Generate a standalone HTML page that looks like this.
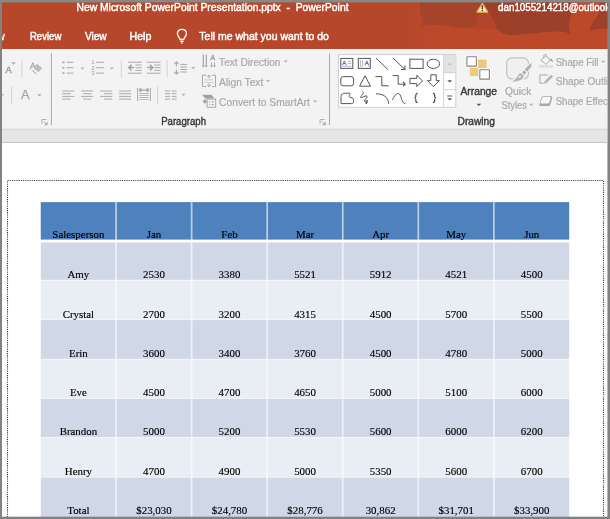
<!DOCTYPE html>
<html><head><meta charset="utf-8"><title>PowerPoint</title>
<style>
html,body{margin:0;padding:0;background:#fff;overflow:hidden}
svg{display:block;will-change:transform}
text{white-space:pre}
</style></head><body>
<svg width="610" height="519" viewBox="0 0 610 519">
<rect x="0" y="0" width="610" height="519" fill="#828282"/>
<rect x="2" y="2" width="605.6" height="515" fill="#fff"/>
<rect x="2" y="2" width="605.6" height="47" fill="#B7472A"/>
<defs><linearGradient id="lg" x1="0" x2="1" y1="0" y2="0"><stop offset="0" stop-color="#B7472A"/><stop offset="0.18" stop-color="#BD492B"/><stop offset="1" stop-color="#BD492B"/></linearGradient></defs>
<g id="decor">
<rect x="405" y="2" width="202.6" height="47" fill="url(#lg)"/>
<path d="M478 13 H498 V30 C490 29 480 28.5 470 28 Z" fill="#B2452B"/>
<path d="M420 2 H481 C480.5 8 479.5 12 478 16 C477 20 476 23 474 25.5 C472 27.5 468 28.5 462 28.3 C456 27.6 450 26 444 25.4 C438 24.6 432 24.2 428 24.5 C425 25.2 422 26.4 419.8 27.8 C421.6 25 422.6 22.5 422.5 20 C420.5 16 419.6 9 420 2Z" fill="#A5432B"/>
<path d="M484 2 H575.5 C572.5 7 571 11.5 571.3 15.5 C569.8 18.5 569.2 22 568.8 26 C569 29.5 570 32.5 571.4 35.4 C568.5 33.2 566 32.2 563.5 31.8 C558 31.2 553 31.4 548 31.8 C541 32.6 534 33.6 527 33.7 C521 34.6 516 35.2 511.6 35.2 C508 34.8 505 34.2 502.5 33.2 C499.6 31.8 497.4 29.6 496.2 26.6 C495 22 492.5 17 489 13 L484 2Z" fill="#9D402A"/>
<path d="M601 2 H607.6 V28.2 C603 28.4 598.6 28.8 594.5 29.4 C592.6 30 590.8 30.8 589.2 31.9 C589.6 29.8 590.2 27.8 591 25.8 C592.4 22.8 594.2 20 596.2 17.2 C597.4 15.8 598.2 14.4 598.8 12.9 C600 9.4 600.6 5.6 601 2Z" fill="#9D402A"/>
</g>
<rect x="2" y="49" width="605.6" height="80" fill="#F3F3F3"/>
<rect x="2" y="129" width="605.6" height="14" fill="#E6E6E6"/>
<rect x="2" y="128.7" width="605.6" height="1" fill="#D6D6D6"/>
<rect x="2" y="142" width="605.6" height="1" fill="#C8C8C8"/>
<text x="76.5" y="10.5" font-size="11" fill="#fff" font-family="'Liberation Sans', sans-serif" text-anchor="start" textLength="272" lengthAdjust="spacingAndGlyphs" stroke="#fff" stroke-width="0.45">New Microsoft PowerPoint Presentation.pptx&#160;&#160;-&#160;&#160;PowerPoint</text>
<path d="M482.3 3.2 L488 12.2 H476.6 Z" fill="#FCE7AE" stroke="#E9A540" stroke-width="1" stroke-linejoin="round"/>
<rect x="481.7" y="5.2" width="1.2" height="4" fill="#2A2A2A"/><rect x="481.7" y="9.9" width="1.2" height="1.3" fill="#2A2A2A"/>
<clipPath id="cr"><rect x="2" y="0" width="605.6" height="519"/></clipPath>
<g clip-path="url(#cr)">
<text x="498.1" y="10.5" font-size="11" fill="#fff" font-family="'Liberation Sans', sans-serif" text-anchor="start" textLength="133.2" lengthAdjust="spacingAndGlyphs" stroke="#fff" stroke-width="0.45">dan1055214218@outlook.com</text>
</g>
<clipPath id="cl"><rect x="2" y="0" width="606" height="519"/></clipPath>
<g clip-path="url(#cl)">
<text x="-2.6" y="39.9" font-size="10" fill="#fff" font-family="'Liberation Sans', sans-serif" text-anchor="start" stroke="#fff" stroke-width="0.3">w</text>
</g>
<text x="29.9" y="39.8" font-size="10.9" fill="#fff" font-family="'Liberation Sans', sans-serif" text-anchor="start" textLength="31.5" lengthAdjust="spacingAndGlyphs" stroke="#fff" stroke-width="0.45">Review</text>
<text x="84.9" y="39.8" font-size="10.9" fill="#fff" font-family="'Liberation Sans', sans-serif" text-anchor="start" textLength="21.8" lengthAdjust="spacingAndGlyphs" stroke="#fff" stroke-width="0.45">View</text>
<text x="129.5" y="39.8" font-size="10.9" fill="#fff" font-family="'Liberation Sans', sans-serif" text-anchor="start" textLength="21.8" lengthAdjust="spacingAndGlyphs" stroke="#fff" stroke-width="0.45">Help</text>
<text x="199.3" y="39.8" font-size="10.9" fill="#fff" font-family="'Liberation Sans', sans-serif" text-anchor="start" textLength="129.6" lengthAdjust="spacingAndGlyphs" stroke="#fff" stroke-width="0.45">Tell me what you want to do</text>
<path d="M180 39.5 C180 37.6 177.4 36.6 177.4 33.6 C177.4 31 179.4 29.4 181.9 29.4 C184.4 29.4 186.4 31 186.4 33.6 C186.4 36.6 183.8 37.6 183.8 39.5 Z" fill="none" stroke="#fff" stroke-width="1.3" stroke-linejoin="round"/>
<path d="M180.3 41.3 H183.5 M180.9 43 H182.9" stroke="#fff" stroke-width="1.2" fill="none"/>
<text x="5.5" y="73.1" font-size="9.2" fill="#A0A0A0" font-family="'Liberation Sans', sans-serif" text-anchor="start" stroke="#A0A0A0" stroke-width="0.5">A</text>
<path d="M11.1 62.15H15.9L13.5 64.85Z" fill="#B0B0B0"/>
<line x1="21.8" y1="59.8" x2="21.8" y2="77.2" stroke="#D4D4D4" stroke-width="1"/>
<text x="30.1" y="68.8" font-size="9" fill="#A4A4A4" font-family="'Liberation Sans', sans-serif" text-anchor="start" textLength="5.6" lengthAdjust="spacingAndGlyphs" stroke="#A4A4A4" stroke-width="0.4">A</text>
<path d="M37 63.8 L42.2 67.9 L38.4 72.3 L33.6 68.1 Z" fill="#BCBCBC"/>
<path d="M32.3 70.3 L36.3 73.8" stroke="#B0B0B0" stroke-width="1.1" fill="none"/>
<line x1="2" y1="94.8" x2="4" y2="94.8" stroke="#A9A9A9" stroke-width="1"/>
<line x1="11.7" y1="86.7" x2="11.7" y2="103.9" stroke="#D4D4D4" stroke-width="1"/>
<text x="21" y="98.8" font-size="12.2" fill="#A9A9A9" font-family="'Liberation Sans', sans-serif" text-anchor="start" textLength="8.6" lengthAdjust="spacingAndGlyphs" stroke="#A9A9A9" stroke-width="0.3">A</text>
<path d="M37.199999999999996 94.14999999999999H41.6L39.4 96.45Z" fill="#A9A9A9"/>
<path d="M41.800000000000004 123.89999999999999 V119.5 H46.4" fill="none" stroke="#B0B0B0" stroke-width="1"/>
<path d="M43.6 121.3 L46.2 123.89999999999999" fill="none" stroke="#B0B0B0" stroke-width="1"/>
<path d="M47.6 121.5 V125.3 H43.800000000000004 Z" fill="#ADADAD"/>
<line x1="51.4" y1="53.3" x2="51.4" y2="125.1" stroke="#A8A8A8" stroke-width="1"/>
<rect x="62.5" y="61.4" width="1.9" height="1.9" fill="#A9A9A9"/>
<line x1="66.6" y1="62.3" x2="73.4" y2="62.3" stroke="#A9A9A9" stroke-width="1"/>
<rect x="62.5" y="66.8" width="1.9" height="1.9" fill="#A9A9A9"/>
<line x1="66.6" y1="67.7" x2="73.4" y2="67.7" stroke="#A9A9A9" stroke-width="1"/>
<rect x="62.5" y="72.19999999999999" width="1.9" height="1.9" fill="#A9A9A9"/>
<line x1="66.6" y1="73.1" x2="73.4" y2="73.1" stroke="#A9A9A9" stroke-width="1"/>
<path d="M80.2 67.44999999999999H84.60000000000001L82.4 69.75Z" fill="#B4B4B4"/>
<text x="91.6" y="64.2" font-size="5.4" fill="#999" font-family="'Liberation Sans', sans-serif" text-anchor="start">1</text>
<line x1="96" y1="62.3" x2="104" y2="62.3" stroke="#A9A9A9" stroke-width="1"/>
<text x="91.6" y="69.60000000000001" font-size="5.4" fill="#999" font-family="'Liberation Sans', sans-serif" text-anchor="start">2</text>
<line x1="96" y1="67.7" x2="104" y2="67.7" stroke="#A9A9A9" stroke-width="1"/>
<text x="91.6" y="75.0" font-size="5.4" fill="#999" font-family="'Liberation Sans', sans-serif" text-anchor="start">3</text>
<line x1="96" y1="73.1" x2="104" y2="73.1" stroke="#A9A9A9" stroke-width="1"/>
<path d="M109.6 67.44999999999999H114.0L111.8 69.75Z" fill="#B4B4B4"/>
<line x1="121.3" y1="60" x2="121.3" y2="77.4" stroke="#D4D4D4" stroke-width="1"/>
<line x1="128.1" y1="62.2" x2="141.7" y2="62.2" stroke="#A9A9A9" stroke-width="1"/>
<line x1="128.1" y1="73.2" x2="141.7" y2="73.2" stroke="#A9A9A9" stroke-width="1"/>
<line x1="135.4" y1="65" x2="141.7" y2="65" stroke="#A9A9A9" stroke-width="1"/>
<line x1="135.4" y1="67.7" x2="141.7" y2="67.7" stroke="#A9A9A9" stroke-width="1"/>
<line x1="135.4" y1="70.4" x2="141.7" y2="70.4" stroke="#A9A9A9" stroke-width="1"/>
<path d="M134 67.6 H129 M131.6 64.7 L128.7 67.6 L131.6 70.5" fill="none" stroke="#A2A2A2" stroke-width="1.5"/>
<line x1="147" y1="62.2" x2="160.6" y2="62.2" stroke="#A9A9A9" stroke-width="1"/>
<line x1="147" y1="73.2" x2="160.6" y2="73.2" stroke="#A9A9A9" stroke-width="1"/>
<line x1="154.3" y1="65" x2="160.6" y2="65" stroke="#A9A9A9" stroke-width="1"/>
<line x1="154.3" y1="67.7" x2="160.6" y2="67.7" stroke="#A9A9A9" stroke-width="1"/>
<line x1="154.3" y1="70.4" x2="160.6" y2="70.4" stroke="#A9A9A9" stroke-width="1"/>
<path d="M147.2 67.6 H152.6 M150 64.7 L152.9 67.6 L150 70.5" fill="none" stroke="#A2A2A2" stroke-width="1.5"/>
<line x1="167.1" y1="60" x2="167.1" y2="77.4" stroke="#D4D4D4" stroke-width="1"/>
<path d="M176.4 61.8 V66.6 M174.2 64.2 L176.4 61.9 L178.6 64.2 M176.4 69.4 V74.4 M174.2 72 L176.4 74.3 L178.6 72" fill="none" stroke="#A9A9A9" stroke-width="1.1"/>
<line x1="180.3" y1="64.4" x2="186.9" y2="64.4" stroke="#A9A9A9" stroke-width="1"/>
<line x1="180.3" y1="67" x2="186.9" y2="67" stroke="#A9A9A9" stroke-width="1"/>
<line x1="180.3" y1="69.5" x2="186.9" y2="69.5" stroke="#A9A9A9" stroke-width="1"/>
<line x1="180.3" y1="72" x2="186.9" y2="72" stroke="#A9A9A9" stroke-width="1"/>
<path d="M191.0 67.05H195.39999999999998L193.2 69.35000000000001Z" fill="#B4B4B4"/>
<line x1="62.3" y1="91" x2="74.2" y2="91" stroke="#A9A9A9" stroke-width="1"/>
<line x1="81.1" y1="91" x2="93.2" y2="91" stroke="#A9A9A9" stroke-width="1"/>
<line x1="100.1" y1="91" x2="112.3" y2="91" stroke="#A9A9A9" stroke-width="1"/>
<line x1="119.1" y1="91" x2="131.1" y2="91" stroke="#A9A9A9" stroke-width="1"/>
<line x1="62.3" y1="93.7" x2="70.8" y2="93.7" stroke="#A9A9A9" stroke-width="1"/>
<line x1="83.1" y1="93.7" x2="91.3" y2="93.7" stroke="#A9A9A9" stroke-width="1"/>
<line x1="104" y1="93.7" x2="112.3" y2="93.7" stroke="#A9A9A9" stroke-width="1"/>
<line x1="119.1" y1="93.7" x2="131.1" y2="93.7" stroke="#A9A9A9" stroke-width="1"/>
<line x1="62.3" y1="96.4" x2="74.2" y2="96.4" stroke="#A9A9A9" stroke-width="1"/>
<line x1="81.1" y1="96.4" x2="93.2" y2="96.4" stroke="#A9A9A9" stroke-width="1"/>
<line x1="100.1" y1="96.4" x2="112.3" y2="96.4" stroke="#A9A9A9" stroke-width="1"/>
<line x1="119.1" y1="96.4" x2="131.1" y2="96.4" stroke="#A9A9A9" stroke-width="1"/>
<line x1="62.3" y1="99.1" x2="70.8" y2="99.1" stroke="#A9A9A9" stroke-width="1"/>
<line x1="83.1" y1="99.1" x2="91.3" y2="99.1" stroke="#A9A9A9" stroke-width="1"/>
<line x1="104" y1="99.1" x2="112.3" y2="99.1" stroke="#A9A9A9" stroke-width="1"/>
<line x1="119.1" y1="99.1" x2="131.1" y2="99.1" stroke="#A9A9A9" stroke-width="1"/>
<line x1="137.6" y1="88" x2="137.6" y2="101" stroke="#A9A9A9" stroke-width="1"/>
<line x1="150.4" y1="88" x2="150.4" y2="101" stroke="#A9A9A9" stroke-width="1"/>
<path d="M139.6 90.1 H148.4 M141.3 88.2 L139.4 90.1 L141.3 92 M146.7 88.2 L148.6 90.1 L146.7 92" fill="none" stroke="#A2A2A2" stroke-width="1.3"/>
<line x1="139.3" y1="93.5" x2="148.8" y2="93.5" stroke="#B8B8B8" stroke-width="1"/>
<line x1="139.3" y1="95.5" x2="148.8" y2="95.5" stroke="#B8B8B8" stroke-width="1"/>
<line x1="139.3" y1="97.5" x2="148.8" y2="97.5" stroke="#B8B8B8" stroke-width="1"/>
<line x1="139.3" y1="99.4" x2="148.8" y2="99.4" stroke="#B8B8B8" stroke-width="1"/>
<line x1="157.6" y1="86.4" x2="157.6" y2="103.8" stroke="#D4D4D4" stroke-width="1"/>
<line x1="165" y1="91" x2="170" y2="91" stroke="#A9A9A9" stroke-width="1"/>
<line x1="171.6" y1="91" x2="176.6" y2="91" stroke="#A9A9A9" stroke-width="1"/>
<line x1="165" y1="93.7" x2="170" y2="93.7" stroke="#A9A9A9" stroke-width="1"/>
<line x1="171.6" y1="93.7" x2="176.6" y2="93.7" stroke="#A9A9A9" stroke-width="1"/>
<line x1="165" y1="96.4" x2="170" y2="96.4" stroke="#A9A9A9" stroke-width="1"/>
<line x1="171.6" y1="96.4" x2="176.6" y2="96.4" stroke="#A9A9A9" stroke-width="1"/>
<line x1="165" y1="99.1" x2="170" y2="99.1" stroke="#A9A9A9" stroke-width="1"/>
<line x1="171.6" y1="99.1" x2="176.6" y2="99.1" stroke="#A9A9A9" stroke-width="1"/>
<path d="M181.3 93.64999999999999H185.7L183.5 95.95Z" fill="#B4B4B4"/>
<path d="M203.3 54.6 V67 M206.3 54.6 V67" fill="none" stroke="#A2A2A2" stroke-width="1.15"/><path d="M211.4 62.4 V67 M214.4 62.4 V67" fill="none" stroke="#A6A6A6" stroke-width="1"/>
<path d="M201.9 65.6 H204.70000000000002 L203.3 67.8Z" fill="#A9A9A9"/>
<path d="M204.9 65.6 H207.70000000000002 L206.3 67.8Z" fill="#A9A9A9"/>
<path d="M210.0 65.6 H212.8 L211.4 67.8Z" fill="#A9A9A9"/>
<path d="M213.0 65.6 H215.8 L214.4 67.8Z" fill="#A9A9A9"/>
<text x="210.2" y="60.3" font-size="7.9" fill="#9C9C9C" font-family="'Liberation Sans', sans-serif" text-anchor="start" textLength="5" lengthAdjust="spacingAndGlyphs" stroke="#9C9C9C" stroke-width="0.35">A</text>
<text x="219.1" y="65.6" font-size="10.4" fill="#A9A9A9" font-family="'Liberation Sans', sans-serif" text-anchor="start" textLength="61.3" lengthAdjust="spacingAndGlyphs" stroke="#A9A9A9" stroke-width="0.2">Text Direction</text>
<path d="M283.5 60.45H287.9L285.7 62.75Z" fill="#B4B4B4"/>
<path d="M206.2 75.2 H202.5 V86.6 H206.2 M211.8 75.2 H215.5 V86.6 H211.8" fill="none" stroke="#A9A9A9" stroke-width="1"/>
<path d="M209 75.2 V78.6 M207.2 76.8 L209 75 L210.8 76.8 M209 83.2 V86.6 M207.2 85 L209 86.8 L210.8 85" fill="none" stroke="#A9A9A9" stroke-width="1"/>
<line x1="204.4" y1="79.8" x2="213.6" y2="79.8" stroke="#D9C9CF" stroke-width="1"/>
<line x1="204.4" y1="82.3" x2="213.6" y2="82.3" stroke="#D9C9CF" stroke-width="1"/>
<text x="219.1" y="85.6" font-size="10.4" fill="#A9A9A9" font-family="'Liberation Sans', sans-serif" text-anchor="start" textLength="44.2" lengthAdjust="spacingAndGlyphs" stroke="#A9A9A9" stroke-width="0.2">Align Text</text>
<path d="M265.8 80.05H270.2L268 82.35000000000001Z" fill="#B4B4B4"/>
<path d="M202.2 94.8 H211.4 L214.4 98.4 H205.2 Z" fill="#A0A0A0"/>
<path d="M202.6 101.4 L205.4 98.6 V100.4 H207 V102.4 H205.4 V104.2 Z" fill="#A0A0A0"/>
<rect x="207.1" y="99.1" width="8.6" height="8.2" fill="#F3F3F3" stroke="#A9A9A9" stroke-width="1"/>
<path d="M209 101.8 H210.2 M211.4 101.8 H214 M209 104.6 H210.2 M211.4 104.6 H214" stroke="#A9A9A9" stroke-width="1"/>
<text x="219.1" y="105.5" font-size="10.4" fill="#A9A9A9" font-family="'Liberation Sans', sans-serif" text-anchor="start" textLength="90.8" lengthAdjust="spacingAndGlyphs" stroke="#A9A9A9" stroke-width="0.2">Convert to SmartArt</text>
<path d="M312.8 100.44999999999999H317.2L315 102.75Z" fill="#B4B4B4"/>
<text x="161.2" y="124.7" font-size="10" fill="#3A3A3A" font-family="'Liberation Sans', sans-serif" text-anchor="start" textLength="44.8" lengthAdjust="spacingAndGlyphs" stroke="#3A3A3A" stroke-width="0.4">Paragraph</text>
<path d="M320.0 123.89999999999999 V119.5 H324.6" fill="none" stroke="#B0B0B0" stroke-width="1"/>
<path d="M321.8 121.3 L324.40000000000003 123.89999999999999" fill="none" stroke="#B0B0B0" stroke-width="1"/>
<path d="M325.8 121.5 V125.3 H322.0 Z" fill="#ADADAD"/>
<line x1="329.5" y1="53.3" x2="329.5" y2="125.1" stroke="#A8A8A8" stroke-width="1"/>
<rect x="338.5" y="54.5" width="117.3" height="52.8" fill="#fff" stroke="#D2D2D2" stroke-width="1"/>
<rect x="444" y="55" width="11.3" height="17.4" fill="#E3E3E3"/>
<line x1="443.7" y1="54.5" x2="443.7" y2="107.3" stroke="#D2D2D2" stroke-width="1"/>
<line x1="443.7" y1="72.6" x2="455.8" y2="72.6" stroke="#D2D2D2" stroke-width="1"/>
<line x1="443.7" y1="89.6" x2="455.8" y2="89.6" stroke="#D2D2D2" stroke-width="1"/>
<path d="M447.6 65 H451.8 L449.7 62.8Z" fill="#C4C4C4"/>
<path d="M447.3 80.2 H452.1 L449.7 82.6Z" fill="#555"/>
<path d="M447.2 96 H452.2" stroke="#555" stroke-width="1"/><path d="M447.3 98.2 H452.1 L449.7 100.6Z" fill="#555"/>
<rect x="340.8" y="58.4" width="12" height="10" fill="none" stroke="#555555" stroke-width="1"/>
<text x="342.3" y="64.8" font-size="6.2" fill="#4A7BD0" font-family="'Liberation Sans', sans-serif" text-anchor="start" stroke="#4A7BD0" stroke-width="0.35">A</text>
<path d="M347.6 61.2 H351.4 M347.6 63.4 H351.4 M342.4 66.4 H351.4" stroke="#B0B0B0" stroke-width="0.9"/>
<rect x="358.3" y="58.4" width="12" height="10" fill="none" stroke="#555555" stroke-width="1"/>
<text x="364.8" y="64.8" font-size="6.2" fill="#4A7BD0" font-family="'Liberation Sans', sans-serif" text-anchor="start" stroke="#4A7BD0" stroke-width="0.35">A</text>
<path d="M360.4 60 V67 M362.6 60 V67" stroke="#B0B0B0" stroke-width="0.9"/><path d="M368.8 65.4 V67" stroke="#B0B0B0" stroke-width="0.9"/>
<path d="M376 58 L387.9 69.6" fill="none" stroke="#555555" stroke-width="1"/>
<path d="M393 58 L404.8 69.4" fill="none" stroke="#555555" stroke-width="1"/><path d="M404.9 65.6 V69.5 H401" fill="none" stroke="#555555" stroke-width="1.1"/>
<rect x="409.9" y="59.2" width="13.2" height="9.2" fill="none" stroke="#555555" stroke-width="1"/>
<ellipse cx="433.4" cy="63.8" rx="6.3" ry="4.6" fill="none" stroke="#555555" stroke-width="1"/>
<rect x="340.8" y="76.6" width="12.8" height="9.2" rx="2.4" fill="none" stroke="#555555" stroke-width="1"/>
<path d="M365 75.8 L370.4 86.2 H359.6 Z" fill="none" stroke="#555555" stroke-width="1" stroke-linejoin="round"/>
<path d="M375.4 76.6 H381.8 V85.8 H388.7" fill="none" stroke="#555555" stroke-width="1"/>
<path d="M392.6 75.6 H398.2 V84.2 H405" fill="none" stroke="#555555" stroke-width="1"/><path d="M403 82 L405.2 84.2 L403 86.4" fill="none" stroke="#555555" stroke-width="1.1"/>
<path d="M409.9 78.4 H416.8 V75.2 L422.5 80.9 L416.8 86.6 V83.6 H409.9 Z" fill="none" stroke="#555555" stroke-width="1" stroke-linejoin="round"/>
<path d="M430.8 74.8 H436.2 V80.6 H439.4 L433.4 86.6 L427.4 80.6 H430.8 Z" fill="none" stroke="#555555" stroke-width="1" stroke-linejoin="round"/>
<path d="M341 103.4 V96.6 C341 94.2 343 93.2 345.4 93.2 H349.6 C350.4 93.2 350.4 94.2 349.8 94.8 C348.6 96 349.2 97.6 350.8 97.6 C352.6 97.6 353.6 98.6 353.6 100.2 V101.8 C353.6 102.8 352.8 103.6 351.8 103.6 H342 C341.4 103.6 341 103.4 341 103.4Z" fill="none" stroke="#555555" stroke-width="1"/>
<path d="M362.6 91.6 C364 93 362.8 94.4 361.6 95.6 C360.2 97 360.4 98 362 97.4 C364 96.6 366.4 95.2 367 96.2 C367.8 97.6 364.2 99.6 364.4 101 C364.6 102 366.6 100.6 367.6 100.4 C367 101.4 366.4 102.8 366 104" fill="none" stroke="#555555" stroke-width="1"/>
<path d="M365.2 101.2 L366 104.2 L368.2 102Z" fill="#555555"/>
<path d="M376 93.8 C383 93.8 388.6 97 388.6 103.8" fill="none" stroke="#555555" stroke-width="1"/>
<path d="M392.4 99.8 C394.4 96 396.2 93.4 398.2 93.4 C401.6 93.4 401 103.6 405.4 103.6" fill="none" stroke="#555555" stroke-width="1"/>
<path d="M417.6 93.4 C416 93.4 415.8 94.2 415.8 95.4 V96.6 C415.8 97.6 415.4 98 414.4 98 C415.4 98 415.8 98.4 415.8 99.4 V100.6 C415.8 101.8 416 102.6 417.6 102.6" fill="none" stroke="#4A4A4A" stroke-width="1.15"/>
<path d="M432.9 93.4 C434.5 93.4 434.7 94.2 434.7 95.4 V96.6 C434.7 97.6 435.1 98 436.1 98 C435.1 98 434.7 98.4 434.7 99.4 V100.6 C434.7 101.8 434.5 102.6 432.9 102.6" fill="none" stroke="#4A4A4A" stroke-width="1.15"/>
<rect x="478.3" y="60" width="7.8" height="7.7" fill="#EEC97C" stroke="#E9C16C" stroke-width="0.6"/>
<rect x="470.2" y="67.9" width="7.8" height="7.7" fill="#EEC97C" stroke="#E9C16C" stroke-width="0.6"/>
<rect x="465.6" y="55.4" width="12.1" height="12" rx="0.6" fill="#FCFCFC"/>
<rect x="478.5" y="68.5" width="12.2" height="12" rx="0.6" fill="#FCFCFC"/>
<rect x="466.9" y="56.7" width="9.5" height="9.4" rx="0.3" fill="#fff" stroke="#848484" stroke-width="1.1"/>
<rect x="479.8" y="69.8" width="9.6" height="9.3" rx="0.3" fill="#fff" stroke="#848484" stroke-width="1.1"/>
<text x="460.5" y="94.8" font-size="10" fill="#3A3A3A" font-family="'Liberation Sans', sans-serif" text-anchor="start" textLength="36.5" lengthAdjust="spacingAndGlyphs" stroke="#3A3A3A" stroke-width="0.4">Arrange</text>
<path d="M476.5 103.7H481.29999999999995L478.9 106.10000000000001Z" fill="#555"/>
<rect x="506.7" y="57.8" width="21.8" height="21.2" rx="5.2" fill="#F1EFF0" stroke="#C2C2C2" stroke-width="1.2"/>
<g stroke="#F3F3F3" stroke-width="2.2" stroke-linejoin="round" fill="#F3F3F3"><path d="M531.4 62.6 V66.5 L527 71.8 L524.6 69.6Z"/><path d="M524 70.4 L526.4 72.6 L524.4 74.8 L522 72.6Z"/><path d="M521.4 73.4 L523.6 75.6 C523.6 79 520 81.6 512 81.6 C516 79.6 517.5 77 518 75.6 C518.6 74 520 73.2 521.4 73.4Z"/></g>
<path d="M531.4 62.6 V66.5 L527 71.8 L524.6 69.6Z" fill="#B2B2B2"/>
<path d="M524 70.6 L526.2 72.6 L524.4 74.6 L522.2 72.6Z" fill="#A6A6A6"/>
<path d="M521.4 73.4 L523.6 75.6 C523.6 79 520 81.6 512 81.6 C516 79.6 517.5 77 518 75.6 C518.6 74 520 73.2 521.4 73.4Z" fill="#B2B2B2"/>
<ellipse cx="519.8" cy="76.6" rx="1.5" ry="1" transform="rotate(-40 519.8 76.6)" fill="#EDEDED"/>
<text x="505" y="94.8" font-size="10.4" fill="#A9A9A9" font-family="'Liberation Sans', sans-serif" text-anchor="start" textLength="26.3" lengthAdjust="spacingAndGlyphs" stroke="#A9A9A9" stroke-width="0.2">Quick</text>
<text x="501.5" y="108.8" font-size="10.4" fill="#A9A9A9" font-family="'Liberation Sans', sans-serif" text-anchor="start" textLength="25.5" lengthAdjust="spacingAndGlyphs" stroke="#A9A9A9" stroke-width="0.2">Styles</text>
<path d="M529.0999999999999 103.75H533.5L531.3 106.05000000000001Z" fill="#B4B4B4"/>
<g clip-path="url(#cr)">
<text x="555.7" y="65.8" font-size="10.4" fill="#A9A9A9" font-family="'Liberation Sans', sans-serif" text-anchor="start" textLength="42.8" lengthAdjust="spacingAndGlyphs" stroke="#A9A9A9" stroke-width="0.2">Shape Fill</text>
<text x="555.7" y="85.3" font-size="10.4" fill="#A9A9A9" font-family="'Liberation Sans', sans-serif" text-anchor="start" textLength="63.6" lengthAdjust="spacingAndGlyphs" stroke="#A9A9A9" stroke-width="0.2">Shape Outline</text>
<text x="555.7" y="104.9" font-size="10.4" fill="#A9A9A9" font-family="'Liberation Sans', sans-serif" text-anchor="start" textLength="59.6" lengthAdjust="spacingAndGlyphs" stroke="#A9A9A9" stroke-width="0.2">Shape Effects</text>
</g>
<path d="M601.0 60.75H605.4000000000001L603.2 63.05Z" fill="#B4B4B4"/>
<path d="M545.6 55.9 L550.6 59.9 L546 64.4 L540.9 60.3 Z" fill="#F7F7F7" stroke="#A9A9A9" stroke-width="1" stroke-linejoin="round"/>
<path d="M543.8 58.2 V55.6 C543.8 53.8 546.6 53.8 546.6 55.6 V57" fill="none" stroke="#A9A9A9" stroke-width="0.9"/>
<path d="M550.4 58.6 C552 59 553 60.4 553 62.6 C552.4 61.6 551.6 61 550.6 60.6 Z" fill="#999"/>
<rect x="539" y="65.2" width="13.9" height="2.5" fill="#E2DADE"/>
<path d="M547.6 75 H539.9 V83.2 H543.8" fill="none" stroke="#A9A9A9" stroke-width="1"/>
<path d="M551.2 74.8 L553 76.6 L546.6 83 L544 83.8 L544.8 81.2 Z" fill="#B2B2B2"/>
<path d="M543.4 96.2 H550.9 C552 96.2 552.5 96.9 552.2 97.9 L550.5 104 C550.1 105.4 549.4 106 548.2 106 H540.6 C539.5 106 539.1 105.3 539.4 104.3 L541.3 98 C541.7 96.8 542.3 96.2 543.4 96.2Z" fill="#A8A8A8"/>
<path d="M543.6 97 H549.6 C550.4 97 550.7 97.5 550.5 98.2 L549.4 102.2 C549.2 103 548.7 103.4 547.9 103.4 H541.3 C540.6 103.4 540.4 103 540.6 102.4 L542 98.2 C542.3 97.4 542.8 97 543.6 97Z" fill="#F8F8F8"/>
<text x="457.6" y="125.1" font-size="10" fill="#3A3A3A" font-family="'Liberation Sans', sans-serif" text-anchor="start" textLength="37.3" lengthAdjust="spacingAndGlyphs" stroke="#3A3A3A" stroke-width="0.4">Drawing</text>
<path d="M7.5 517 V180.5 H603.5 V517" stroke="#333" stroke-width="1.1" stroke-dasharray="1.1 1.1" fill="none"/>
<rect x="40.75" y="202.1" width="528.45" height="37.5" fill="#4F81BD"/>
<rect x="40.75" y="242.4" width="528.45" height="37.900000000000006" fill="#D0D8E8"/>
<rect x="40.75" y="280.3" width="528.45" height="39.30000000000001" fill="#E9EDF4"/>
<rect x="40.75" y="319.6" width="528.45" height="39.599999999999966" fill="#D0D8E8"/>
<rect x="40.75" y="359.2" width="528.45" height="39.30000000000001" fill="#E9EDF4"/>
<rect x="40.75" y="398.5" width="528.45" height="38.89999999999998" fill="#D0D8E8"/>
<rect x="40.75" y="437.4" width="528.45" height="39.80000000000001" fill="#E9EDF4"/>
<rect x="40.75" y="477.2" width="528.45" height="39.80000000000001" fill="#D0D8E8"/>
<rect x="40.75" y="279.8" width="528.45" height="1" fill="#fff" opacity="0.55"/>
<rect x="40.75" y="319.1" width="528.45" height="1" fill="#fff" opacity="0.55"/>
<rect x="40.75" y="358.7" width="528.45" height="1" fill="#fff" opacity="0.55"/>
<rect x="40.75" y="398.0" width="528.45" height="1" fill="#fff" opacity="0.55"/>
<rect x="40.75" y="436.9" width="528.45" height="1" fill="#fff" opacity="0.55"/>
<rect x="40.75" y="476.7" width="528.45" height="1" fill="#fff" opacity="0.55"/>
<rect x="115.22" y="202.1" width="1.7" height="315" fill="#fff" opacity="0.62"/>
<rect x="190.78" y="202.1" width="1.7" height="315" fill="#fff" opacity="0.62"/>
<rect x="266.34" y="202.1" width="1.7" height="315" fill="#fff" opacity="0.62"/>
<rect x="341.90" y="202.1" width="1.7" height="315" fill="#fff" opacity="0.62"/>
<rect x="417.46" y="202.1" width="1.7" height="315" fill="#fff" opacity="0.62"/>
<rect x="493.02" y="202.1" width="1.7" height="315" fill="#fff" opacity="0.62"/>
<g clip-path="url(#cb)"><clipPath id="cb"><rect x="0" y="0" width="610" height="517"/></clipPath>
<text x="78.39" y="238.3" font-size="10.9" fill="#000" font-family="'Liberation Serif', serif" text-anchor="middle" stroke="#000" stroke-width="0.15">Salesperson</text>
<text x="153.95" y="238.3" font-size="10.9" fill="#000" font-family="'Liberation Serif', serif" text-anchor="middle" stroke="#000" stroke-width="0.15">Jan</text>
<text x="229.51" y="238.3" font-size="10.9" fill="#000" font-family="'Liberation Serif', serif" text-anchor="middle" stroke="#000" stroke-width="0.15">Feb</text>
<text x="305.07" y="238.3" font-size="10.9" fill="#000" font-family="'Liberation Serif', serif" text-anchor="middle" stroke="#000" stroke-width="0.15">Mar</text>
<text x="380.63" y="238.3" font-size="10.9" fill="#000" font-family="'Liberation Serif', serif" text-anchor="middle" stroke="#000" stroke-width="0.15">Apr</text>
<text x="456.19" y="238.3" font-size="10.9" fill="#000" font-family="'Liberation Serif', serif" text-anchor="middle" stroke="#000" stroke-width="0.15">May</text>
<text x="531.75" y="238.3" font-size="10.9" fill="#000" font-family="'Liberation Serif', serif" text-anchor="middle" stroke="#000" stroke-width="0.15">Jun</text>
<text x="78.39" y="277.8" font-size="10.9" fill="#000" font-family="'Liberation Serif', serif" text-anchor="middle" stroke="#000" stroke-width="0.15">Amy</text>
<text x="153.95" y="277.8" font-size="10.9" fill="#000" font-family="'Liberation Serif', serif" text-anchor="middle" stroke="#000" stroke-width="0.15">2530</text>
<text x="229.51" y="277.8" font-size="10.9" fill="#000" font-family="'Liberation Serif', serif" text-anchor="middle" stroke="#000" stroke-width="0.15">3380</text>
<text x="305.07" y="277.8" font-size="10.9" fill="#000" font-family="'Liberation Serif', serif" text-anchor="middle" stroke="#000" stroke-width="0.15">5521</text>
<text x="380.63" y="277.8" font-size="10.9" fill="#000" font-family="'Liberation Serif', serif" text-anchor="middle" stroke="#000" stroke-width="0.15">5912</text>
<text x="456.19" y="277.8" font-size="10.9" fill="#000" font-family="'Liberation Serif', serif" text-anchor="middle" stroke="#000" stroke-width="0.15">4521</text>
<text x="531.75" y="277.8" font-size="10.9" fill="#000" font-family="'Liberation Serif', serif" text-anchor="middle" stroke="#000" stroke-width="0.15">4500</text>
<text x="78.39" y="317.8" font-size="10.9" fill="#000" font-family="'Liberation Serif', serif" text-anchor="middle" stroke="#000" stroke-width="0.15">Crystal</text>
<text x="153.95" y="317.8" font-size="10.9" fill="#000" font-family="'Liberation Serif', serif" text-anchor="middle" stroke="#000" stroke-width="0.15">2700</text>
<text x="229.51" y="317.8" font-size="10.9" fill="#000" font-family="'Liberation Serif', serif" text-anchor="middle" stroke="#000" stroke-width="0.15">3200</text>
<text x="305.07" y="317.8" font-size="10.9" fill="#000" font-family="'Liberation Serif', serif" text-anchor="middle" stroke="#000" stroke-width="0.15">4315</text>
<text x="380.63" y="317.8" font-size="10.9" fill="#000" font-family="'Liberation Serif', serif" text-anchor="middle" stroke="#000" stroke-width="0.15">4500</text>
<text x="456.19" y="317.8" font-size="10.9" fill="#000" font-family="'Liberation Serif', serif" text-anchor="middle" stroke="#000" stroke-width="0.15">5700</text>
<text x="531.75" y="317.8" font-size="10.9" fill="#000" font-family="'Liberation Serif', serif" text-anchor="middle" stroke="#000" stroke-width="0.15">5500</text>
<text x="78.39" y="357" font-size="10.9" fill="#000" font-family="'Liberation Serif', serif" text-anchor="middle" stroke="#000" stroke-width="0.15">Erin</text>
<text x="153.95" y="357" font-size="10.9" fill="#000" font-family="'Liberation Serif', serif" text-anchor="middle" stroke="#000" stroke-width="0.15">3600</text>
<text x="229.51" y="357" font-size="10.9" fill="#000" font-family="'Liberation Serif', serif" text-anchor="middle" stroke="#000" stroke-width="0.15">3400</text>
<text x="305.07" y="357" font-size="10.9" fill="#000" font-family="'Liberation Serif', serif" text-anchor="middle" stroke="#000" stroke-width="0.15">3760</text>
<text x="380.63" y="357" font-size="10.9" fill="#000" font-family="'Liberation Serif', serif" text-anchor="middle" stroke="#000" stroke-width="0.15">4500</text>
<text x="456.19" y="357" font-size="10.9" fill="#000" font-family="'Liberation Serif', serif" text-anchor="middle" stroke="#000" stroke-width="0.15">4780</text>
<text x="531.75" y="357" font-size="10.9" fill="#000" font-family="'Liberation Serif', serif" text-anchor="middle" stroke="#000" stroke-width="0.15">5000</text>
<text x="78.39" y="396.1" font-size="10.9" fill="#000" font-family="'Liberation Serif', serif" text-anchor="middle" stroke="#000" stroke-width="0.15">Eve</text>
<text x="153.95" y="396.1" font-size="10.9" fill="#000" font-family="'Liberation Serif', serif" text-anchor="middle" stroke="#000" stroke-width="0.15">4500</text>
<text x="229.51" y="396.1" font-size="10.9" fill="#000" font-family="'Liberation Serif', serif" text-anchor="middle" stroke="#000" stroke-width="0.15">4700</text>
<text x="305.07" y="396.1" font-size="10.9" fill="#000" font-family="'Liberation Serif', serif" text-anchor="middle" stroke="#000" stroke-width="0.15">4650</text>
<text x="380.63" y="396.1" font-size="10.9" fill="#000" font-family="'Liberation Serif', serif" text-anchor="middle" stroke="#000" stroke-width="0.15">5000</text>
<text x="456.19" y="396.1" font-size="10.9" fill="#000" font-family="'Liberation Serif', serif" text-anchor="middle" stroke="#000" stroke-width="0.15">5100</text>
<text x="531.75" y="396.1" font-size="10.9" fill="#000" font-family="'Liberation Serif', serif" text-anchor="middle" stroke="#000" stroke-width="0.15">6000</text>
<text x="78.39" y="435.1" font-size="10.9" fill="#000" font-family="'Liberation Serif', serif" text-anchor="middle" stroke="#000" stroke-width="0.15">Brandon</text>
<text x="153.95" y="435.1" font-size="10.9" fill="#000" font-family="'Liberation Serif', serif" text-anchor="middle" stroke="#000" stroke-width="0.15">5000</text>
<text x="229.51" y="435.1" font-size="10.9" fill="#000" font-family="'Liberation Serif', serif" text-anchor="middle" stroke="#000" stroke-width="0.15">5200</text>
<text x="305.07" y="435.1" font-size="10.9" fill="#000" font-family="'Liberation Serif', serif" text-anchor="middle" stroke="#000" stroke-width="0.15">5530</text>
<text x="380.63" y="435.1" font-size="10.9" fill="#000" font-family="'Liberation Serif', serif" text-anchor="middle" stroke="#000" stroke-width="0.15">5600</text>
<text x="456.19" y="435.1" font-size="10.9" fill="#000" font-family="'Liberation Serif', serif" text-anchor="middle" stroke="#000" stroke-width="0.15">6000</text>
<text x="531.75" y="435.1" font-size="10.9" fill="#000" font-family="'Liberation Serif', serif" text-anchor="middle" stroke="#000" stroke-width="0.15">6200</text>
<text x="78.39" y="474.7" font-size="10.9" fill="#000" font-family="'Liberation Serif', serif" text-anchor="middle" stroke="#000" stroke-width="0.15">Henry</text>
<text x="153.95" y="474.7" font-size="10.9" fill="#000" font-family="'Liberation Serif', serif" text-anchor="middle" stroke="#000" stroke-width="0.15">4700</text>
<text x="229.51" y="474.7" font-size="10.9" fill="#000" font-family="'Liberation Serif', serif" text-anchor="middle" stroke="#000" stroke-width="0.15">4900</text>
<text x="305.07" y="474.7" font-size="10.9" fill="#000" font-family="'Liberation Serif', serif" text-anchor="middle" stroke="#000" stroke-width="0.15">5000</text>
<text x="380.63" y="474.7" font-size="10.9" fill="#000" font-family="'Liberation Serif', serif" text-anchor="middle" stroke="#000" stroke-width="0.15">5350</text>
<text x="456.19" y="474.7" font-size="10.9" fill="#000" font-family="'Liberation Serif', serif" text-anchor="middle" stroke="#000" stroke-width="0.15">5600</text>
<text x="531.75" y="474.7" font-size="10.9" fill="#000" font-family="'Liberation Serif', serif" text-anchor="middle" stroke="#000" stroke-width="0.15">6700</text>
<text x="78.39" y="513.9" font-size="10.9" fill="#000" font-family="'Liberation Serif', serif" text-anchor="middle" stroke="#000" stroke-width="0.15">Total</text>
<text x="153.95" y="513.9" font-size="10.9" fill="#000" font-family="'Liberation Serif', serif" text-anchor="middle" stroke="#000" stroke-width="0.15">$23,030</text>
<text x="229.51" y="513.9" font-size="10.9" fill="#000" font-family="'Liberation Serif', serif" text-anchor="middle" stroke="#000" stroke-width="0.15">$24,780</text>
<text x="305.07" y="513.9" font-size="10.9" fill="#000" font-family="'Liberation Serif', serif" text-anchor="middle" stroke="#000" stroke-width="0.15">$28,776</text>
<text x="380.63" y="513.9" font-size="10.9" fill="#000" font-family="'Liberation Serif', serif" text-anchor="middle" stroke="#000" stroke-width="0.15">30,862</text>
<text x="456.19" y="513.9" font-size="10.9" fill="#000" font-family="'Liberation Serif', serif" text-anchor="middle" stroke="#000" stroke-width="0.15">$31,701</text>
<text x="531.75" y="513.9" font-size="10.9" fill="#000" font-family="'Liberation Serif', serif" text-anchor="middle" stroke="#000" stroke-width="0.15">$33,900</text>
</g>
<rect x="0" y="516.7" width="610" height="2.3" fill="#828282"/>
<rect x="607.7" y="0" width="2.3" height="519" fill="#828282"/>
<rect x="0" y="0" width="2" height="519" fill="#828282"/>
<rect x="0" y="0" width="610" height="2.4" fill="#858989"/>
</svg>
</body></html>
